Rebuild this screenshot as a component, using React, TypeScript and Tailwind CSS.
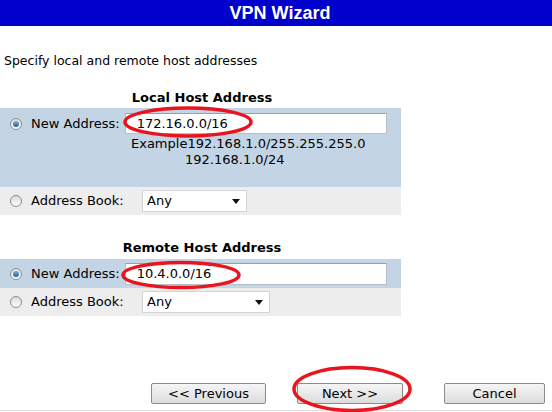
import React from "react";

const body = { fontFamily: '"DejaVu Sans", Verdana, sans-serif' };

function Radio({ checked }: { checked?: boolean }) {
  return (
    <span className="flex h-[12px] w-[12px] items-center justify-center rounded-full border border-[#8c8c8c] bg-gradient-to-b from-[#dcdcdc] to-white">
      {checked && <span className="h-[6px] w-[6px] rounded-full bg-gradient-to-b from-[#7fb2d8] to-[#1f5f96]" />}
    </span>
  );
}

function Select({ width }: { width: string }) {
  return (
    <div className={`flex h-[22px] items-center justify-between border border-[#d4d4d4] bg-white pl-[4px] pr-[6px] ${width}`}>
      <span className="text-[13px] text-black">Any</span>
      <svg width="8" height="5" viewBox="0 0 8 5">
        <path d="M0 0h8L4 5z" fill="#111" />
      </svg>
    </div>
  );
}

function TextInput({ value, height }: { value: string; height: string }) {
  return (
    <div className={`ml-[5px] flex w-[262px] items-center border border-[#b8bec6] border-t-[#9aa0a8] bg-white pl-[11px] text-[13px] text-black ${height}`}>
      {value}
    </div>
  );
}

export default function App() {
  return (
    <div className="relative h-[412px] w-[552px] overflow-hidden bg-white text-black" style={body}>
      {/* title bar */}
      <div
        className="flex h-[26px] items-center justify-center bg-[#0000cc] pl-[8px] text-[18px] font-bold text-white"
        style={{ fontFamily: '"Liberation Sans", Arial, sans-serif' }}
      >
        VPN Wizard
      </div>

      <div className="mt-[27px] pl-[4px] text-[12.5px] leading-[16px]">Specify local and remote host addresses</div>

      {/* local */}
      <div className="w-[401px]">
        <div className="mt-[21px] pl-[3px] text-center text-[13px] font-bold leading-[16px]">Local Host Address</div>
        <div className="mt-[2px] h-[79px] bg-[#c3d5e5] pt-[5px]">
          <div className="flex items-center">
            <span className="ml-[10px]"><Radio checked /></span>
            <span className="ml-[9px] text-[13px] leading-[16px]">New Address:</span>
            <TextInput value="172.16.0.0/16" height="h-[21px]" />
          </div>
          <div className="mt-[2px] pl-[131px] text-[13px] leading-[16px]">
            <div>Example192.168.1.0/255.255.255.0</div>
            <div className="pl-[54px]">192.168.1.0/24</div>
          </div>
        </div>
        <div className="flex h-[28px] items-center bg-[#ededed]">
          <span className="ml-[10px]"><Radio /></span>
          <span className="ml-[9px] w-[111px] text-[13px] leading-[16px]">Address Book:</span>
          <Select width="w-[105px]" />
        </div>

        {/* remote */}
        <div className="mt-[25px] pl-[3px] text-center text-[13px] font-bold leading-[16px]">Remote Host Address</div>
        <div className="mt-[3px] flex h-[29px] items-center bg-[#c3d5e5]">
          <span className="ml-[10px]"><Radio checked /></span>
          <span className="ml-[9px] text-[13px] leading-[16px]">New Address:</span>
          <TextInput value="10.4.0.0/16" height="h-[22px]" />
        </div>
        <div className="flex h-[28px] items-center bg-[#ededed]">
          <span className="ml-[10px]"><Radio /></span>
          <span className="ml-[9px] w-[111px] text-[13px] leading-[16px]">Address Book:</span>
          <Select width="w-[128px]" />
        </div>
      </div>

      {/* buttons */}
      <div className="mt-[67px] flex text-[13px]">
        <button className="ml-[151px] h-[21px] w-[115px] rounded-[2px] border border-[#8a8a8a] bg-gradient-to-b from-[#f6f6f6] to-[#dcdcdc] leading-none">
          &lt;&lt; Previous
        </button>
        <button className="ml-[31px] h-[21px] w-[106px] rounded-[2px] border border-[#8a8a8a] bg-gradient-to-b from-[#f6f6f6] to-[#dcdcdc] leading-none">
          Next &gt;&gt;
        </button>
        <button className="ml-[41px] h-[21px] w-[101px] rounded-[2px] border border-[#8a8a8a] bg-gradient-to-b from-[#f6f6f6] to-[#dcdcdc] leading-none">
          Cancel
        </button>
      </div>
      <div className="mt-[6px] border-t border-[#dedede]" />

      {/* red annotation marks */}
      <svg className="pointer-events-none absolute left-0 top-0" width="552" height="412">
        <g fill="none" stroke="#e8141e" strokeWidth="3.5">
          <ellipse cx="188" cy="122" rx="63" ry="14" />
          <ellipse cx="181" cy="275" rx="58" ry="12.5" />
          <ellipse cx="352" cy="389" rx="58" ry="21.5" />
        </g>
      </svg>
    </div>
  );
}
